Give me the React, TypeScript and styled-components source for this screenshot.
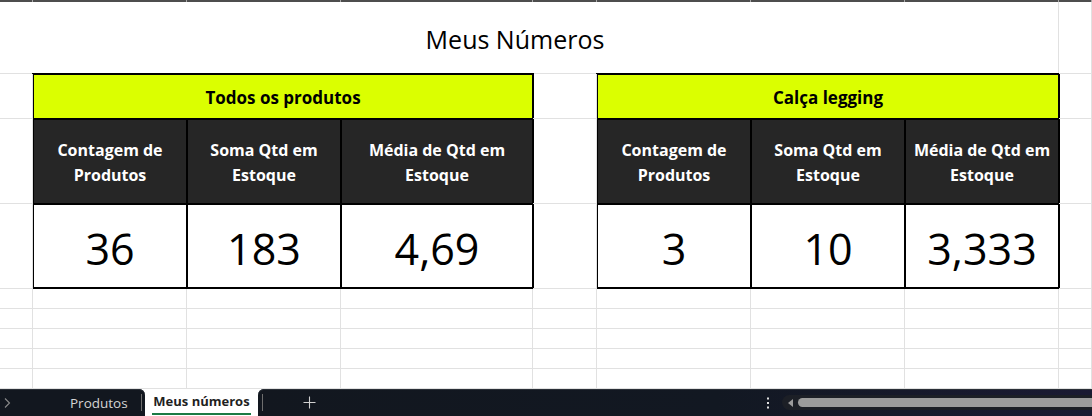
import React from 'react';
import styled, { createGlobalStyle } from 'styled-components';

const GlobalStyle = createGlobalStyle`
  html, body {
    margin: 0;
    padding: 0;
    background: #fff;
  }
  body {
    font-family: 'Open Sans', 'Liberation Sans', sans-serif;
    overflow: hidden;
  }
`;

const COLUMNS = '33px 154px 154px 192px 64px 154px 154px 154px 1fr';

const Window = styled.div`
  width: 1092px;
  height: 416px;
  display: flex;
  flex-direction: column;
  overflow: hidden;
  background: #fff;
`;

const HeaderEdge = styled.div`
  display: grid;
  grid-template-columns: ${COLUMNS};
  height: 2px;
  background: #4d4d4d;
`;

const HeaderTick = styled.div`
  border-right: 1px solid #a8a8a8;
`;

const Sheet = styled.div`
  display: grid;
  grid-template-columns: ${COLUMNS};
  grid-template-rows: 72px 45px 85px 85px repeat(5, 20px);
`;

const Cell = styled.div`
  border-right: 1px solid #e1e1e1;
  border-bottom: 1px solid #e1e1e1;
`;

const TitleCell = styled(Cell)`
  grid-column: 1 / 9;
  grid-row: 1;
  display: flex;
  align-items: center;
  justify-content: center;
  padding-right: 28px;
  padding-top: 2px;
  font-size: 25px;
  color: #000;
`;

const SummaryTable = styled.div<{ $area: string; $cols: string }>`
  grid-column: ${p => p.$area};
  grid-row: 2 / 5;
  margin: -1px -1px 0 -1px;
  display: grid;
  grid-template-columns: ${p => p.$cols};
  grid-template-rows: 43px 83px 1fr;
  gap: 2px;
  padding: 2px;
  background: #000;
`;

const TableTitle = styled.div`
  grid-column: 1 / -1;
  background: #dbff00;
  display: flex;
  align-items: center;
  justify-content: center;
  padding-top: 2px;
  font-size: 17px;
  font-weight: 700;
  color: #000;
`;

const MetricLabel = styled.div`
  background: #262626;
  color: #fff;
  display: flex;
  align-items: center;
  justify-content: center;
  text-align: center;
  padding-top: 3px;
  font-size: 16px;
  line-height: 25px;
  font-weight: 700;
`;

const MetricValue = styled.div`
  background: #fff;
  color: #000;
  display: flex;
  align-items: center;
  justify-content: center;
  padding-top: 4px;
  font-size: 43px;
`;

const TabBar = styled.div`
  height: 27px;
  display: flex;
  background: #fff;
`;

const BarLeft = styled.div`
  width: 145px;
  flex-shrink: 0;
  display: flex;
  align-items: center;
  background: #12171f;
  border-top-right-radius: 6px;
  box-shadow: inset 0 1px 0 #2a2f37;
`;

const BarRight = styled.div`
  flex: 1;
  display: flex;
  align-items: center;
  background: linear-gradient(90deg, #12171f 0%, #121822 55%, #1a1a33 100%);
  border-top-left-radius: 6px;
  box-shadow: inset 0 1px 0 #2a2f37;
  padding-left: 4px;
  overflow: hidden;
`;

const NavArrow = styled.span`
  display: flex;
  margin-left: 3px;
  color: #8a8a8a;
`;

const SheetTab = styled.span`
  margin-left: 59px;
  font-size: 13.5px;
  color: #d4d4d4;
`;

const TabDivider = styled.span`
  width: 1px;
  height: 17px;
  background: #6e6e6e;
  flex-shrink: 0;
`;

const LeftDivider = styled(TabDivider)`
  margin-left: 13px;
`;

const ActiveTab = styled.div`
  width: 113px;
  flex-shrink: 0;
  display: flex;
  justify-content: center;
  padding-top: 3px;
  box-sizing: border-box;
`;

const ActiveLabel = styled.span`
  font-size: 13px;
  font-weight: 700;
  color: #1f1f1f;
  line-height: 18px;
  height: 21px;
  border-bottom: 2px solid #1b7a44;
  padding: 0 1px;
`;

const PlusButton = styled.span`
  display: flex;
  margin-left: 40px;
  color: #d0d0d0;
`;

const Spacer = styled.span`
  flex: 1;
`;

const MoreDots = styled.span`
  display: flex;
  color: #e0e0e0;
  margin-right: 12px;
`;

const ScrollTrack = styled.div`
  width: 310px;
  height: 15px;
  flex-shrink: 0;
  display: flex;
  align-items: center;
  background: #1c1f26;
  border-radius: 8px 0 0 8px;
  padding-left: 6px;
  box-sizing: border-box;
`;

const ScrollArrow = styled.span`
  display: flex;
  color: #9c9c9c;
`;

const ScrollThumb = styled.div`
  flex: 1;
  height: 9px;
  margin-left: 5px;
  background: #9c9c9c;
  border-radius: 5px 0 0 5px;
`;

interface Metric {
  label: string[];
  value: string;
}

interface SummaryProps {
  area: string;
  cols: string;
  title: string;
  metrics: Metric[];
}

const Summary: React.FC<SummaryProps> = ({ area, cols, title, metrics }) => (
  <SummaryTable $area={area} $cols={cols}>
    <TableTitle>{title}</TableTitle>
    {metrics.map(m => (
      <MetricLabel key={m.label.join(' ')}>
        <span>
          {m.label[0]}
          <br />
          {m.label[1]}
        </span>
      </MetricLabel>
    ))}
    {metrics.map(m => (
      <MetricValue key={m.label.join(' ') + m.value}>{m.value}</MetricValue>
    ))}
  </SummaryTable>
);

const labels = [
  ['Contagem de', 'Produtos'],
  ['Soma Qtd em', 'Estoque'],
  ['Média de Qtd em', 'Estoque'],
];

const allProducts: Metric[] = [
  { label: labels[0], value: '36' },
  { label: labels[1], value: '183' },
  { label: labels[2], value: '4,69' },
];

const leggings: Metric[] = [
  { label: labels[0], value: '3' },
  { label: labels[1], value: '10' },
  { label: labels[2], value: '3,333' },
];

// 9 columns x 9 rows, minus the title (8) and both tables (9 each)
const EMPTY_CELLS = 81 - 8 - 18;

export default function App() {
  return (
    <Window>
      <GlobalStyle />
      <HeaderEdge>
        {Array.from({ length: 9 }).map((_, i) => (
          <HeaderTick key={i} />
        ))}
      </HeaderEdge>
      <Sheet>
        <TitleCell>Meus Números</TitleCell>
        <Summary area="2 / 5" cols="152px 152px 1fr" title="Todos os produtos" metrics={allProducts} />
        <Summary area="6 / 9" cols="152px 152px 1fr" title="Calça legging" metrics={leggings} />
        {Array.from({ length: EMPTY_CELLS }).map((_, i) => (
          <Cell key={i} />
        ))}
      </Sheet>
      <TabBar>
        <BarLeft>
          <NavArrow>
            <svg width="8" height="12" viewBox="0 0 8 12" fill="none">
              <path d="M2 1.5 L6.5 6 L2 10.5" stroke="currentColor" strokeWidth="1.1" />
            </svg>
          </NavArrow>
          <SheetTab>Produtos</SheetTab>
          <LeftDivider />
        </BarLeft>
        <ActiveTab>
          <ActiveLabel>Meus números</ActiveLabel>
        </ActiveTab>
        <BarRight>
          <TabDivider />
          <PlusButton>
            <svg width="13" height="13" viewBox="0 0 13 13">
              <path d="M6.5 0.5 V12.5 M0.5 6.5 H12.5" stroke="currentColor" strokeWidth="1.1" />
            </svg>
          </PlusButton>
          <Spacer />
          <MoreDots>
            <svg width="4" height="12" viewBox="0 0 4 12">
              <rect x="1" y="0.5" width="2" height="2" fill="currentColor" />
              <rect x="1" y="5" width="2" height="2" fill="currentColor" />
              <rect x="1" y="9.5" width="2" height="2" fill="currentColor" />
            </svg>
          </MoreDots>
          <ScrollTrack>
            <ScrollArrow>
              <svg width="5" height="8" viewBox="0 0 5 8">
                <path d="M5 0 L0 4 L5 8 Z" fill="currentColor" />
              </svg>
            </ScrollArrow>
            <ScrollThumb />
          </ScrollTrack>
        </BarRight>
      </TabBar>
    </Window>
  );
}
